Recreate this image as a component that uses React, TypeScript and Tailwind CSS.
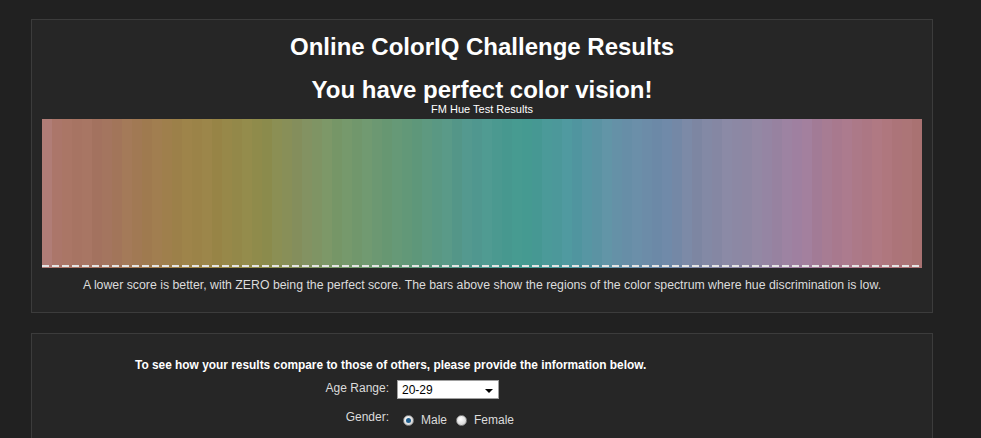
import { useMemo } from "react";

const stops: [number, string][] = [
	[0, "#b27f7d"],
	[20, "#aa7566"],
	[60, "#a47460"],
	[100, "#a17a52"],
	[140, "#9d8249"],
	[170, "#9a8548"],
	[220, "#8e8c4b"],
	[260, "#849060"],
	[290, "#7a9868"],
	[365, "#629878"],
	[430, "#529890"],
	[481, "#449a90"],
	[531, "#5098a0"],
	[581, "#6890a8"],
	[628, "#7088a8"],
	[651, "#7e88a4"],
	[708, "#9088a4"],
	[758, "#a080a0"],
	[791, "#a87a90"],
	[841, "#b07880"],
	[880, "#a87270"],
];

const hex = (h: string) => [1, 3, 5].map((i) => parseInt(h.slice(i, i + 2), 16));

function colorAt(x: number, jitter: number) {
	let i = 0;
	while (i < stops.length - 2 && stops[i + 1][0] < x) i++;
	const [x0, c0] = stops[i];
	const [x1, c1] = stops[i + 1];
	const t = Math.min(1, Math.max(0, (x - x0) / (x1 - x0)));
	const a = hex(c0);
	const b = hex(c1);
	const rgb = a.map((v, k) => Math.round(v + (b[k] - v) * t + jitter));
	return `rgb(${rgb.join(",")})`;
}

function HueChart() {
	const bands = useMemo(() => {
		const out: string[] = [];
		// small brightness wobble so the bands read as separate bars
		const jit = [0, -1.5, 1, -0.5, 1.5, -2, 0.5, -1, 2, 0, -1.5, 1];
		for (let i = 0; i < 88; i++) out.push(colorAt(i * 10 + 5, jit[i % jit.length]));
		return out;
	}, []);

	return (
		<div className="relative mt-[4px] flex h-[149px] w-[880px]">
			{bands.map((c, i) => (
				<div key={i} className="h-full flex-1" style={{ backgroundColor: c }} />
			))}
			<div className="absolute left-0 right-0 bottom-[1px] h-[2px] bg-[repeating-linear-gradient(90deg,#e4e4e4_0_7px,transparent_7px_10px)]" />
		</div>
	);
}

function Radio({ checked }: { checked?: boolean }) {
	return (
		<span className="inline-flex h-[11px] w-[11px] items-center justify-center rounded-full border border-[#8a8a8a] bg-[radial-gradient(circle_at_40%_35%,#ffffff,#c8c8c8)]">
			{checked && <span className="h-[5px] w-[5px] rounded-full bg-[#1f5f8f]" />}
		</span>
	);
}

export default function App() {
	return (
		<div className="min-h-screen bg-[#212121] pt-[19px] pl-[31px] font-['Liberation_Sans',Arial,sans-serif]">
			<div className="w-[902px] border border-[#3c3c3c] bg-[#262626] px-[10px] pt-[12px] pb-[20px] text-center text-white">
				<h1 className="text-[24px] leading-[30px] font-bold">Online ColorIQ Challenge Results</h1>
				<h2 className="mt-[14px] text-[24px] leading-[28px] font-bold">You have perfect color vision!</h2>
				<div className="text-[11px] leading-[11px]">FM Hue Test Results</div>
				<HueChart />
				<p className="mt-[10px] text-[12.3px] leading-[14px] text-[#dcdcdc]">
					A lower score is better, with ZERO being the perfect score. The bars above show the regions of the color spectrum where hue discrimination is low.
				</p>
			</div>

			<div className="mt-[20px] h-[120px] w-[902px] border border-[#3c3c3c] bg-[#262626] pt-[24px] text-white">
				<div className="pl-[103px] text-[11.9px] leading-[14px] font-bold">
					To see how your results compare to those of others, please provide the information below.
				</div>
				<div className="mt-[8px] grid grid-cols-[357px_1fr] items-start gap-x-[8px] gap-y-[11px] text-[12px] leading-[14px] text-[#dcdcdc]">
					<div className="pt-[1px] text-right">Age Range:</div>
					<div className="relative flex h-[19px] w-[102px] items-center border border-[#a0a0a0] bg-white pl-[4px] text-[12px] text-black">
						20-29
						<span className="absolute right-[5px] top-[8px] h-0 w-0 border-x-[4px] border-t-[4px] border-x-transparent border-t-black" />
					</div>
					<div className="text-right">Gender:</div>
					<div className="flex items-center pt-[3px] pl-[6px] text-[12px]">
						<Radio checked />
						<span className="ml-[7px]">Male</span>
						<span className="ml-[9px] flex"><Radio /></span>
						<span className="ml-[7px]">Female</span>
					</div>
				</div>
			</div>
		</div>
	);
}
